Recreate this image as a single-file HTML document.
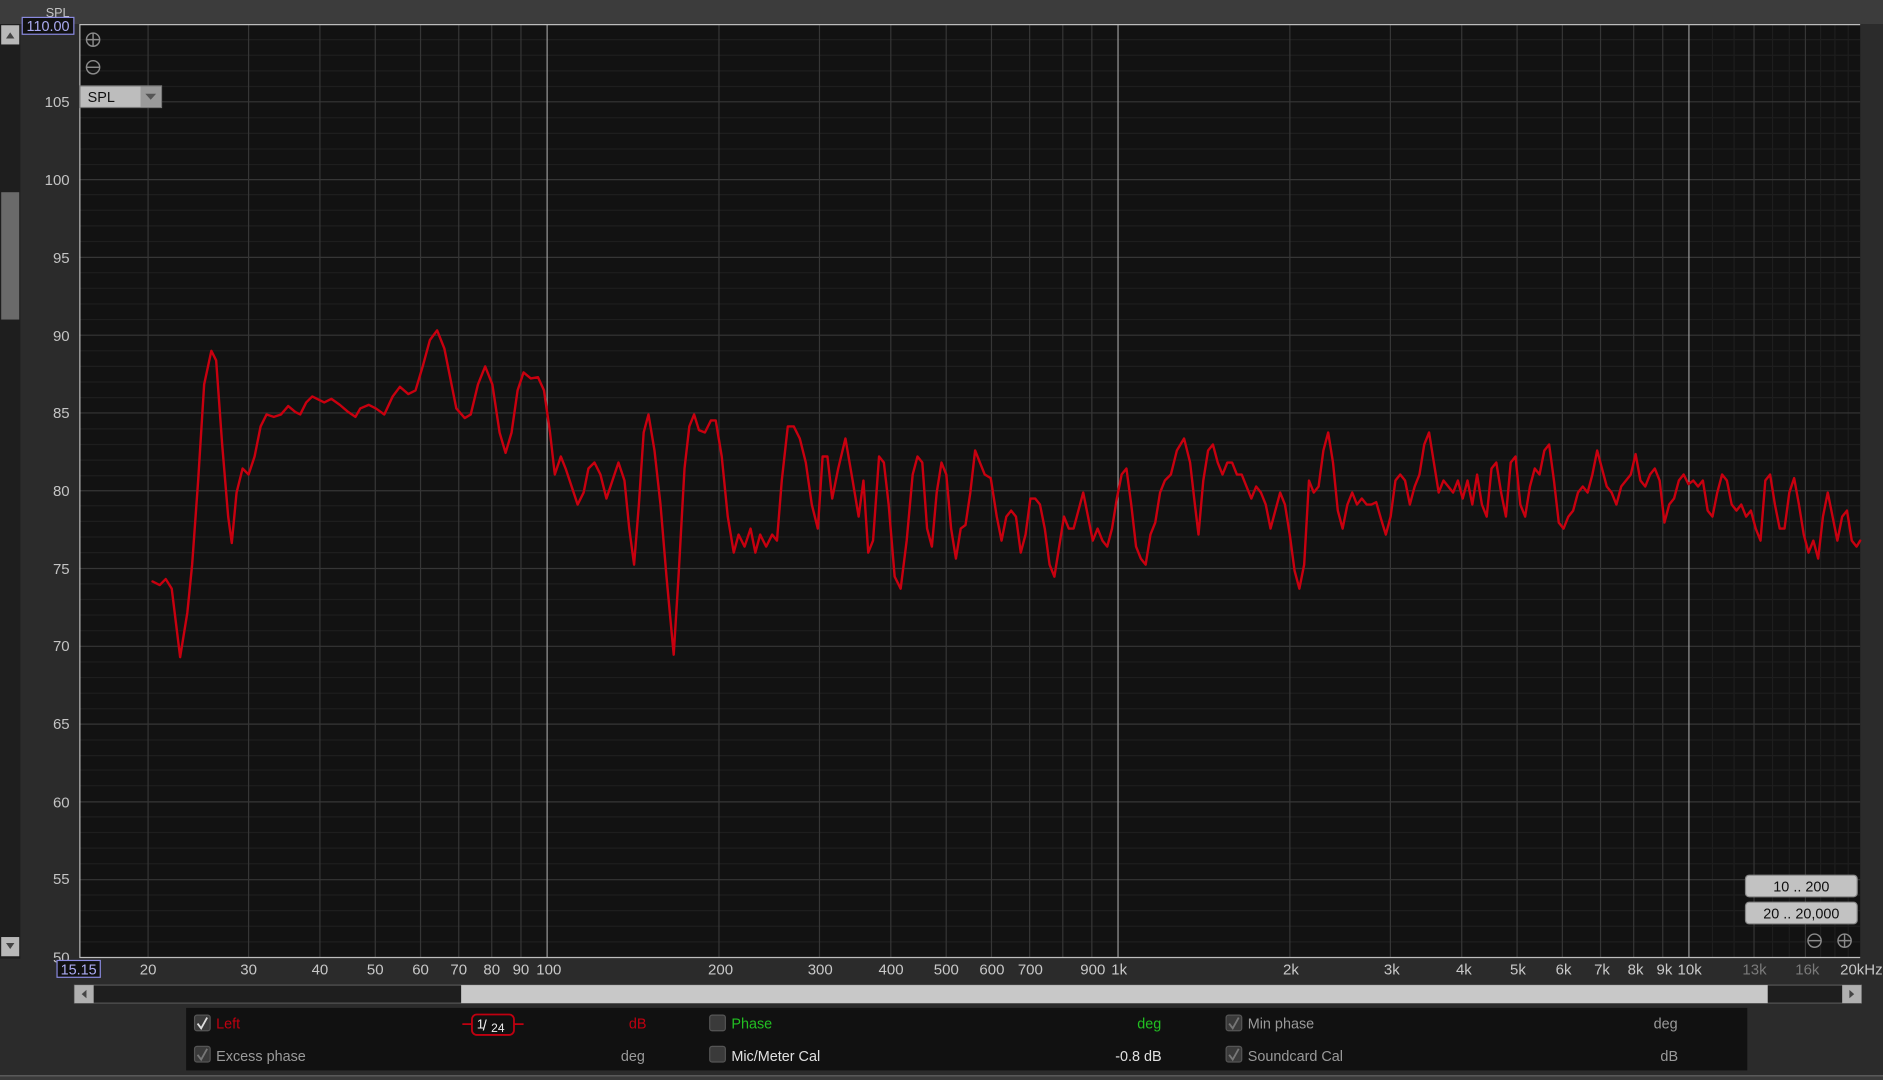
<!DOCTYPE html>
<html><head><meta charset="utf-8"><style>
html,body{margin:0;padding:0;background:#2a2a2a;width:1883px;height:1080px;overflow:hidden}
svg{display:block}
text{font-family:"Liberation Sans",sans-serif}
</style></head><body>
<svg width="1883" height="1080" viewBox="0 0 1568 899" preserveAspectRatio="none">
<rect x="0" y="0" width="1568" height="899" fill="#2b2b2b"/>
<rect x="0" y="0" width="1568" height="20" fill="#3c3c3c"/>
<!-- left scrollbar -->
<rect x="0" y="20" width="17" height="778" fill="#1e1e1e"/>
<rect x="1" y="21" width="15" height="16" fill="#b8b8b8"/>
<path d="M5 32 L8.5 27 L12 32Z" fill="#444"/>
<rect x="1" y="160" width="15" height="106" fill="#6a6a6a"/>
<rect x="1" y="780" width="15" height="16" fill="#b8b8b8"/>
<path d="M5 785 L8.5 790 L12 785Z" fill="#444"/>
<!-- plot -->
<rect x="66" y="20" width="1483" height="777" fill="#121212"/>
<g stroke="#1e1e1e" stroke-width="1">
<path d="M66 33H1549M66 46H1549M66 59H1549M66 72H1549M66 98H1549M66 111H1549M66 124H1549M66 137H1549M66 162H1549M66 175H1549M66 188H1549M66 201H1549M66 227H1549M66 240H1549M66 253H1549M66 266H1549M66 292H1549M66 305H1549M66 318H1549M66 331H1549M66 357H1549M66 370H1549M66 383H1549M66 396H1549M66 421H1549M66 434H1549M66 447H1549M66 460H1549M66 486H1549M66 499H1549M66 512H1549M66 525H1549M66 551H1549M66 564H1549M66 577H1549M66 590H1549M66 616H1549M66 629H1549M66 641H1549M66 654H1549M66 680H1549M66 693H1549M66 706H1549M66 719H1549M66 745H1549M66 758H1549M66 771H1549M66 784H1549"/>
<path d="M1426 20V797M1444 20V797M1476 20V797M1490 20V797M1516 20V797M1528 20V797M1539 20V797"/>
</g>
<g stroke="#363636" stroke-width="1">
<path d="M66 84.75H1549M66 149.5H1549M66 214.25H1549M66 279H1549M66 343.75H1549M66 408.5H1549M66 473.25H1549M66 538H1549M66 602.75H1549M66 667.5H1549M66 732.25H1549"/>
<path d="M123.3 20V797M207 20V797M266.4 20V797M312.5 20V797M350.2 20V797M382 20V797M409.5 20V797M433.8 20V797M598.7 20V797M682.4 20V797M741.8 20V797M787.9 20V797M825.6 20V797M857.4 20V797M885 20V797M909.2 20V797M1074.1 20V797M1157.8 20V797M1217.2 20V797M1263.3 20V797M1301 20V797M1332.8 20V797M1360.4 20V797M1384.6 20V797M1460.6 20V797M1503.4 20V797"/>
</g>
<g stroke="#9a9a9a" stroke-width="1">
<path d="M455.6 20V797M931 20V797M1406.4 20V797"/>
</g>
<path d="M66 20.5H1549M66.5 20V797M66 797H1549" stroke="#bdbdbd" stroke-width="1" fill="none"/>
<!-- curve -->
<polyline fill="none" stroke="#c8000f" stroke-width="2" stroke-linejoin="round" stroke-linecap="round" points="127,484 133,487 138,482 143,490 150,547 156,510 160,470 165,400 170,320 176,292 180,300 185,370 190,430 193,452 197,410 202,390 207,395 212,380 217,355 222,345 228,347 234,345 240,338 246,343 250,345 255,335 260,330 266,333 270,335 276,332 283,337 290,343 296,347 300,340 307,337 313,340 320,345 327,330 333,322 340,328 346,325 352,305 358,283 364,275 370,290 376,320 380,340 387,348 392,345 398,320 404,305 410,320 416,360 421,377 426,360 431,325 436,310 442,315 448,314 453,325 458,360 462,395 467,380 471,390 476,405 481,420 486,410 490,390 495,385 500,395 505,415 510,400 515,385 520,400 524,440 528,470 532,420 536,360 540,345 545,375 550,420 555,480 561,545 565,480 570,390 574,355 578,345 582,358 587,360 592,350 596,350 601,380 606,430 611,460 615,445 620,455 625,440 629,460 633,445 638,455 643,445 647,450 651,400 656,355 661,355 666,365 671,385 676,420 681,440 685,380 689,380 693,415 698,390 704,365 710,400 715,430 719,400 723,460 727,450 732,380 736,385 740,420 745,480 750,490 755,450 760,395 764,380 768,385 772,440 776,455 780,410 784,385 788,395 792,440 796,465 800,440 804,437 808,410 812,375 816,385 820,395 825,398 830,430 834,450 838,430 842,425 846,430 850,460 854,445 858,415 862,415 866,420 870,440 874,470 878,480 882,455 886,430 890,440 894,440 898,425 902,410 906,430 910,450 914,440 918,450 922,455 926,440 930,415 934,395 938,390 942,420 946,455 950,465 954,470 958,445 962,435 966,410 970,400 975,395 980,375 986,365 991,385 995,420 998,445 1002,400 1006,375 1010,370 1014,385 1018,395 1022,385 1026,385 1030,395 1034,395 1038,405 1042,415 1046,405 1050,410 1054,420 1058,440 1062,425 1066,410 1070,420 1074,445 1078,475 1082,490 1086,470 1090,400 1094,410 1098,405 1102,375 1106,360 1110,385 1114,425 1118,440 1122,420 1126,410 1130,420 1134,415 1138,420 1142,420 1146,418 1150,432 1154,445 1158,430 1162,400 1166,395 1170,400 1174,420 1178,405 1182,395 1186,370 1190,360 1194,385 1198,410 1202,400 1206,405 1210,410 1214,400 1218,415 1222,400 1226,420 1230,395 1234,420 1238,430 1242,390 1246,385 1250,410 1254,430 1258,385 1262,380 1266,420 1270,430 1274,405 1278,390 1282,395 1286,375 1290,370 1294,400 1298,435 1302,440 1306,430 1310,425 1314,410 1318,405 1322,410 1326,395 1330,375 1334,390 1338,405 1342,410 1346,420 1350,405 1354,400 1358,395 1362,378 1366,400 1370,405 1374,395 1378,390 1382,400 1386,435 1390,420 1394,415 1398,400 1402,395 1406,403 1410,400 1414,405 1418,400 1422,425 1426,430 1430,410 1434,395 1438,400 1442,420 1446,425 1450,420 1454,430 1458,425 1462,440 1466,450 1470,400 1474,395 1478,420 1482,440 1486,440 1490,410 1494,398 1498,420 1502,445 1506,460 1510,450 1514,465 1518,430 1522,410 1526,430 1530,450 1534,430 1538,425 1542,450 1546,455 1549,450"/>
<!-- y labels -->
<g fill="#c4c4c4" font-size="12.5" text-anchor="end">
<text x="58" y="89">105</text><text x="58" y="154">100</text><text x="58" y="219">95</text><text x="58" y="284">90</text><text x="58" y="348">85</text><text x="58" y="413">80</text><text x="58" y="478">75</text><text x="58" y="542">70</text><text x="58" y="607">65</text><text x="58" y="672">60</text><text x="58" y="736">55</text><text x="58" y="801">50</text>
</g>
<text x="48" y="14" fill="#c4c4c4" font-size="10.5" text-anchor="middle">SPL</text>
<rect x="18.5" y="14.5" width="43" height="14" fill="#111" stroke="#8a8ae0"/>
<text x="40" y="26" fill="#aaaaf0" font-size="12" text-anchor="middle">110.00</text>
<!-- zoom icons -->
<g stroke="#8a8a8a" fill="none" stroke-width="1.2">
<circle cx="77.5" cy="33" r="5.5"/><path d="M72 33H83M77.5 27.5V38.5"/>
<circle cx="77.5" cy="56" r="5.5"/><path d="M72 56H83"/>
<circle cx="1511" cy="783" r="5.5"/><path d="M1505.5 783H1516.5"/>
<circle cx="1536" cy="783" r="5.5"/><path d="M1530.5 783H1541.5M1536 777.5V788.5"/>
</g>
<!-- SPL dropdown -->
<rect x="66.5" y="71.5" width="68" height="18" fill="#bdbdbd" stroke="#777"/>
<rect x="117" y="72" width="17" height="17" fill="#9a9a9a"/>
<path d="M121 78H130L125.5 83Z" fill="#555"/>
<text x="73" y="85" fill="#111" font-size="12">SPL</text>
<!-- x labels -->
<g fill="#c8c8c8" font-size="12.5" text-anchor="middle">
<text x="123.3" y="811">20</text><text x="207" y="811">30</text><text x="266.4" y="811">40</text><text x="312.5" y="811">50</text><text x="350.2" y="811">60</text><text x="382" y="811">70</text><text x="409.5" y="811">80</text><text x="433.8" y="811">90</text><text x="457" y="811">100</text>
<text x="600" y="811">200</text><text x="683" y="811">300</text><text x="742" y="811">400</text><text x="788" y="811">500</text><text x="826" y="811">600</text><text x="858" y="811">700</text><text x="910" y="811">900</text><text x="932" y="811">1k</text>
<text x="1075" y="811">2k</text><text x="1159" y="811">3k</text><text x="1219" y="811">4k</text><text x="1264" y="811">5k</text><text x="1302" y="811">6k</text><text x="1334" y="811">7k</text><text x="1362" y="811">8k</text><text x="1386" y="811">9k</text><text x="1407" y="811">10k</text>
<text x="1550" y="811">20kHz</text>
</g>
<g fill="#7a7a7a" font-size="12.5" text-anchor="middle"><text x="1461" y="811">13k</text><text x="1505" y="811">16k</text></g>
<rect x="47.5" y="799.5" width="36" height="14" fill="#111" stroke="#8a8ae0"/>
<text x="65.5" y="811" fill="#aaaaf0" font-size="12" text-anchor="middle">15.15</text>
<!-- range buttons -->
<rect x="1453.5" y="728.5" width="93" height="18" rx="3" fill="#c2c2c2" stroke="#888"/>
<text x="1500" y="742" fill="#111" font-size="12" text-anchor="middle">10 .. 200</text>
<rect x="1453.5" y="751" width="93" height="18" rx="3" fill="#c2c2c2" stroke="#888"/>
<text x="1500" y="764.5" fill="#111" font-size="12" text-anchor="middle">20 .. 20,000</text>
<!-- horizontal scrollbar -->
<rect x="62" y="820" width="1488" height="15" fill="#1e1e1e" stroke="#555"/>
<rect x="62" y="820" width="16" height="15" fill="#b0b0b0"/>
<path d="M72 824V831L68 827.5Z" fill="#444"/>
<rect x="384" y="820" width="1088" height="15" fill="#c8c8c8"/>
<rect x="1534" y="820" width="16" height="15" fill="#b0b0b0"/>
<path d="M1540 824V831L1544 827.5Z" fill="#444"/>
<!-- legend panel -->
<rect x="155" y="839" width="1300" height="52" fill="#111"/>
<g fill="#3a3a3a" stroke="#555">
<rect x="162" y="845" width="13" height="13" rx="2"/><rect x="162" y="871" width="13" height="13" rx="2"/>
<rect x="591" y="845" width="13" height="13" rx="2"/><rect x="591" y="871" width="13" height="13" rx="2"/>
<rect x="1021" y="845" width="13" height="13" rx="2"/><rect x="1021" y="871" width="13" height="13" rx="2"/>
</g>
<g fill="none" stroke-width="1.5">
<path d="M164.5 852L167.5 856L172.5 847" stroke="#ddd"/>
<path d="M164.5 878L167.5 882L172.5 873" stroke="#777"/>
<path d="M1023.5 852L1026.5 856L1031.5 847" stroke="#777"/>
<path d="M1023.5 878L1026.5 882L1031.5 873" stroke="#777"/>
</g>
<g font-size="12">
<text x="180" y="856" fill="#c00010">Left</text>
<text x="531" y="856" fill="#c00010" text-anchor="middle">dB</text>
<text x="180" y="883" fill="#9a9a9a">Excess phase</text>
<text x="527" y="883" fill="#9a9a9a" text-anchor="middle">deg</text>
<text x="609" y="856" fill="#22c022">Phase</text>
<text x="957" y="856" fill="#22c022" text-anchor="middle">deg</text>
<text x="609" y="883" fill="#e0e0e0">Mic/Meter Cal</text>
<text x="948" y="883" fill="#e0e0e0" text-anchor="middle">-0.8 dB</text>
<text x="1039" y="856" fill="#9a9a9a">Min phase</text>
<text x="1387" y="856" fill="#9a9a9a" text-anchor="middle">deg</text>
<text x="1039" y="883" fill="#9a9a9a">Soundcard Cal</text>
<text x="1390" y="883" fill="#9a9a9a" text-anchor="middle">dB</text>
</g>
<path d="M385 852.5H393M428 852.5H436" stroke="#c00010" stroke-width="1.5"/>
<rect x="393" y="844.5" width="35" height="17" rx="4" fill="#111" stroke="#c00010" stroke-width="1.5"/>
<text x="397" y="856" fill="#eee" font-size="11">1</text><text x="402" y="858" fill="#eee" font-size="12">/</text><text x="409" y="859" fill="#eee" font-size="10">24</text>
<!-- bottom -->
<rect x="0" y="895" width="1568" height="4" fill="#3a3a3a"/>
<path d="M0 895.5H1568" stroke="#666"/>
</svg>
</body></html>
